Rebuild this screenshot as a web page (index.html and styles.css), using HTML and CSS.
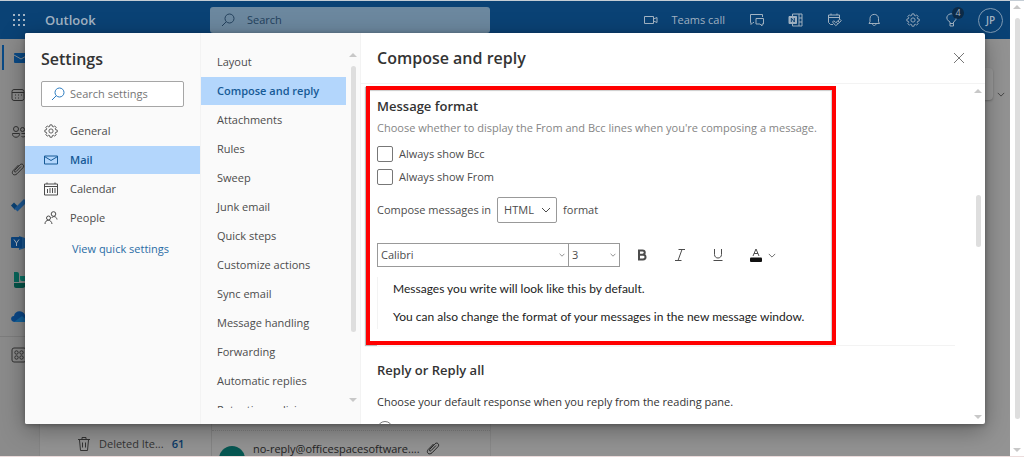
FILE: index.html
```html
<!DOCTYPE html>
<html lang="en">
<head>
  <meta charset="UTF-8" />
  <meta name="viewport" content="width=device-width, initial-scale=1" />
  <title>Outlook - Settings</title>
  <link rel="stylesheet" href="styles.css">
</head>
<body>

<!-- shared icons -->
<svg class="sprite" aria-hidden="true">
  <symbol id="i-search" viewBox="0 0 14 14"><circle cx="8.5" cy="5.5" r="4.500" /><path d="M5.3 8.7L1 13" /></symbol>
  <symbol id="i-chevron" viewBox="0 0 10 6"><path d="M1 1l4 4 4-4" /></symbol>
  <symbol id="i-clip" viewBox="0 0 14 14"><path d="M10 4.5L5 9.7c-1 1-2.300-.2-1.300-1.300L9 2.800c2-2 5 .6 3 2.900l-6 6.100c-3 2.800-6.300-.4-3.800-3.300L7.500 3" /></symbol>
  <symbol id="i-gear" viewBox="0 0 16 16"><path d="M6.800 1h2.400l.4 1.900 1 .4 1.600-1.100 1.700 1.700-1.100 1.600.4 1 1.900.4v2.300l-1.900.4-.4 1 1.100 1.600-1.700 1.700-1.600-1.100-1 .4-.4 1.900H6.800l-.4-1.900-1-.4-1.600 1.100-1.700-1.700 1.100-1.600-.4-1L1 9.200V6.900l1.800-.4.4-1-1.100-1.600 1.700-1.700 1.600 1.100 1-.4z" /><circle cx="8" cy="8" r="2.400" /></symbol>
</svg>

<div class="page">
  <div class="app">
    <header class="topbar">
      <button class="waffle" aria-label="App launcher">
        <svg width="14" height="14" viewBox="0 0 14 14">
          <path d="M1 1h2v2H1zM6 1h2v2H6zM11 1h2v2h-2zM1 6h2v2H1zM6 6h2v2H6zM11 6h2v2h-2zM1 11h2v2H1zM6 11h2v2H6zM11 11h2v2h-2z" />
        </svg>
      </button>
      <span class="brand">Outlook</span>
      <label class="top-search">
        <svg class="icon" width="14" height="14"><use href="#i-search" /></svg>
        <input type="text" placeholder="Search" aria-label="Search" />
      </label>
      <div class="top-actions">
        <button class="teams">
          <svg class="icon" width="16" height="12" viewBox="0 0 16 12"><path d="M1.500 2.500h9v7h-9zM10.500 5l3.500-1.500v5L10.500 7" /></svg>
          Teams call
        </button>
        <button aria-label="Chat">
          <svg class="icon" width="16" height="16" viewBox="0 0 16 16"><path d="M5 10.500H4l-2 2v-2H1.500v-8h12V5M7 6.500h7.500v5.500H13v2l-2-2H7z" /></svg>
        </button>
        <button aria-label="OneNote feed">
          <svg class="icon" width="16" height="16" viewBox="0 0 16 16"><path d="M4.500 4V2h9.500v12H4.500v-2M11 2v12M11 6h3M11 10h3" /><path class="solid" d="M1 4.500h7.500v7H1z" /><path class="cut" d="M3.300 10V6l3 4V6" /></svg>
        </button>
        <button aria-label="My day">
          <svg class="icon" width="16" height="16" viewBox="0 0 16 16"><path d="M6 12.500H3.500l-2-2V3h11v4M1.500 5.500h11M4 1.500V3M10 1.500V3M5.500 10l1.300-1.300 2 2 4-3.500 1.500 1.500-5.500 5z" /><path d="M9.500 10.500l1.300 1.300M11 9l1.500 1.300" /></svg>
        </button>
        <button aria-label="Notifications">
          <svg class="icon" width="16" height="16" viewBox="0 0 16 16"><path d="M3 11.500h10.500l-1-1.700V6.500c0-5.500-8.500-5.500-8.500 0v3.300zM6.500 12c.3 2 3.200 2 3.500 0" /></svg>
        </button>
        <button aria-label="Settings">
          <svg class="icon" width="14" height="14"><use href="#i-gear" /></svg>
        </button>
        <button class="tips" aria-label="Tips">
          <svg class="icon" width="16" height="16" viewBox="0 0 16 16"><path d="M6 11.500V10C.5 7 3 1.800 7.500 1.800S14.500 7 9.500 10v1.500zM6 11.500V14h3.500v-2.500" /></svg>
          <span class="badge">4</span>
        </button>
        <button class="avatar">JP</button>
      </div>
    </header>

    <div class="workspace">
      <nav class="rail">
        <a class="current" href="#" aria-label="Mail"><svg width="16" height="14" viewBox="0 0 16 14"><rect x="1" y="2" width="14" height="10" rx="1" fill="#0a4a86" /><path d="M1 4l7 4 7-4" fill="none" stroke="#8d9297" /></svg></a>
        <a href="#" aria-label="Calendar"><svg class="icon" width="14" height="14" viewBox="0 0 14 14"><rect x="1" y="1.500" width="12" height="11" rx="2" /><path d="M1 4.500h12M4 7h1M7 7h1M10 7h1M4 10h1M7 10h1" /></svg></a>
        <a href="#" aria-label="People"><svg class="icon" width="16" height="14" viewBox="0 0 16 14"><circle cx="5" cy="4" r="2.500" /><circle cx="11.500" cy="4.500" r="2" /><path d="M1.500 8.500h7c.5 5-7.500 5-7 0zM10.500 8.500H15c0 3-2 4-4.500 3" /></svg></a>
        <a href="#" aria-label="Files"><svg class="icon" width="14" height="14"><use href="#i-clip" /></svg></a>
        <a href="#" aria-label="To Do"><svg width="16" height="14" viewBox="0 0 16 14"><path d="M0 6.500l3-3 3.500 3.500L4 11z" fill="#0b4274" /><path d="M3.500 9.500L13 0l3 3-9.500 9.500z" fill="#1d5a96" /></svg></a>
        <a href="#" aria-label="Yammer"><svg width="16" height="16" viewBox="0 0 16 16"><path d="M8 1l6 2 2 5-2 5-6 2z" fill="#1c5a94" /><rect y="2" width="11" height="11" rx="1" fill="#0b4580" /><path d="M3 4.500l2.500 3.500L8 4.500M5.500 8v3" fill="none" stroke="#aab4bf" /></svg></a>
        <a href="#" aria-label="Bookings"><svg width="16" height="16" viewBox="0 0 16 16"><path d="M3 0h3a2 2 0 012 2v8H3z" fill="#08665b" /><path d="M9 4h5v5H11a2 2 0 01-2-2z" fill="#0a7467" /><path d="M3 11h12v1a4 4 0 01-4 4H5a2 2 0 01-2-2z" fill="#045449" /></svg></a>
        <a href="#" aria-label="OneDrive"><svg width="18" height="12" viewBox="0 0 18 12"><path d="M4 11C-1 11-1 5 3 5c1-6 9-6 11-1 4 0 5 7 1 7z" fill="#0a4787" /><path d="M3 11l8-6 6 5-2 1z" fill="#14639c" /></svg></a>
        <a class="more" href="#" aria-label="More apps"><svg class="icon" width="16" height="16" viewBox="0 0 16 16"><rect x="1" y="1" width="14" height="14" rx="2" /><circle cx="5.500" cy="5.500" r="1.700" /><circle cx="10.500" cy="5.500" r="1.700" /><circle cx="5.500" cy="10.500" r="1.700" /><circle cx="10.500" cy="10.500" r="1.700" /></svg></a>
      </nav>
      <div class="folders">
        <a class="folder" href="#">
          <svg class="icon" width="14" height="16" viewBox="0 0 14 16"><path d="M1 3.500h12M5 3V1.500h4V3M2.500 4l1 10.500h7l1-10.500M5.500 6.500v5M8.500 6.500v5" /></svg>
          <span>Deleted Ite...</span>
          <b>61</b>
        </a>
      </div>
      <div class="messages">
        <div class="message">
          <span class="face"></span>
          <span class="sender">no-reply@officespacesoftware....</span>
          <svg class="icon" width="14" height="14"><use href="#i-clip" /></svg>
        </div>
      </div>
      <div class="reading">
        <div class="ribbon"></div>
        <svg class="icon" width="8" height="5"><use href="#i-chevron" /></svg>
      </div>
    </div>

    <div class="overlay">
      <div class="dialog" role="dialog" aria-label="Settings">
        <div class="categories">
          <h2>Settings</h2>
          <label class="search-settings">
            <svg class="icon" width="14" height="14"><use href="#i-search" /></svg>
            <input type="text" placeholder="Search settings" aria-label="Search settings" />
          </label>
          <nav>
            <a href="#"><svg class="icon" width="14" height="14"><use href="#i-gear" /></svg>General</a>
            <a class="active" href="#"><svg class="icon" width="14" height="14" viewBox="0 0 14 14"><path d="M.5 3h13v8H.500zM.5 3.500L7 7.500l6.500-4" /></svg>Mail</a>
            <a href="#"><svg class="icon" width="14" height="14" viewBox="0 0 14 14"><path d="M.5 2h13v11H.500zM.5 4.500h13M3 .5V2M11 .5V2M3.500 7v4M6 6v5M8.500 6v5M11 6v5" /></svg>Calendar</a>
            <a href="#"><svg class="icon" width="14" height="14" viewBox="0 0 14 14"><circle cx="9.500" cy="3" r="2.300" /><circle cx="4.500" cy="7" r="2" /><path d="M1 13c0-5 6.500-5 7 0M7.500 7c2-2.500 5-1.500 5.500 1.500" /></svg>People</a>
          </nav>
          <a class="quick" href="#">View quick settings</a>
        </div>

        <div class="sections">
          <nav>
            <a href="#">Layout</a>
            <a class="active" href="#">Compose and reply</a>
            <a href="#">Attachments</a>
            <a href="#">Rules</a>
            <a href="#">Sweep</a>
            <a href="#">Junk email</a>
            <a href="#">Quick steps</a>
            <a href="#">Customize actions</a>
            <a href="#">Sync email</a>
            <a href="#">Message handling</a>
            <a href="#">Forwarding</a>
            <a href="#">Automatic replies</a>
            <a href="#">Retention policies</a>
          </nav>
          <div class="scrollbar"><i class="up"></i><span class="thumb"></span><i class="down"></i></div>
        </div>

        <main class="detail">
          <div class="detail-head">
            <h2>Compose and reply</h2>
            <button class="close" aria-label="Close">
              <svg class="icon" width="12" height="12" viewBox="0 0 12 12"><path d="M1 1l10 10M11 1L1 11" /></svg>
            </button>
          </div>
          <div class="detail-body">
            <div class="content">
              <section class="format">
                <h3>Message format</h3>
                <p class="hint">Choose whether to display the From and Bcc lines when you're composing a message.</p>
                <label class="check"><input type="checkbox" />Always show Bcc</label>
                <label class="check"><input type="checkbox" />Always show From</label>
                <div class="compose">
                  <label for="mode">Compose messages in</label>
                  <span class="select mode">
                    <select id="mode"><option>HTML</option></select>
                    <svg class="icon" width="10" height="6"><use href="#i-chevron" /></svg>
                  </span>
                  <span>format</span>
                </div>
                <div class="tools">
                  <span class="select font">
                    <select aria-label="Font"><option>Calibri</option></select>
                    <svg class="icon" width="6" height="4"><use href="#i-chevron" /></svg>
                  </span>
                  <span class="select size">
                    <select aria-label="Font size"><option>3</option></select>
                    <svg class="icon" width="6" height="4"><use href="#i-chevron" /></svg>
                  </span>
                  <button aria-label="Bold"><svg class="icon bold" width="12" height="14" viewBox="0 0 12 14"><path d="M3 2.500h3.500c3 0 3 4.200 0 4.200H3zM3 6.700h4c3.400 0 3.400 4.800 0 4.800H3z" /></svg></button>
                  <button aria-label="Italic"><svg class="icon" width="12" height="14" viewBox="0 0 12 14"><path d="M4.500 1.500H11M1 12.500h6.500M8 1.500l-4 11" /></svg></button>
                  <button aria-label="Underline"><svg class="icon" width="12" height="14" viewBox="0 0 12 14"><path d="M2.500 1v5.500c0 4.700 7 4.700 7 0V1M1.500 12.500h9" /></svg></button>
                  <button class="color" aria-label="Font color">
                    <svg class="icon" width="12" height="14" viewBox="0 0 12 14"><path d="M3 8l3-7 3 7M4 5.500h4" /><rect x="0" y="9.500" width="12" height="4.500" rx="1" /></svg>
                    <svg class="icon" width="8" height="5"><use href="#i-chevron" /></svg>
                  </button>
                </div>
                <div class="preview">
                  <p>Messages you write will look like this by default.</p>
                  <p>You can also change the format of your messages in the new message window.</p>
                </div>
              </section>
              <section class="reply">
                <h3>Reply or Reply all</h3>
                <p>Choose your default response when you reply from the reading pane.</p>
                <input type="radio" name="reply" aria-label="Reply" />
              </section>
            </div>
            <div class="scrollbar"><i class="up"></i><span class="thumb"></span><i class="down"></i></div>
          </div>
        </main>
      </div>
    </div>
  </div>
  <div class="scrollbar outer"><i class="up"></i><span class="thumb"></span><i class="down"></i></div>
</div>

</body>
</html>
```

FILE: styles.css
```css
* {
  margin: 0;
  padding: 0;
  box-sizing: border-box;
}

body {
  font-family: "Open Sans", "Noto Sans", sans-serif;
  font-size: 11px;
  line-height: 16px;
  color: #4c4c4c;
  background: #fff;
}

button,
input,
select {
  font: inherit;
  color: inherit;
  border: none;
  background: none;
}

a {
  color: inherit;
  text-decoration: none;
}

svg {
  flex: none;
}

.sprite {
  display: none;
}

.icon {
  fill: none;
  stroke: currentColor;
  stroke-width: 1;
}

.page {
  display: flex;
  height: 100vh;
  border-top: 1px solid #c4cdd5;
  border-bottom: 1px solid #ecdcdc;
  overflow: hidden;
}

.app {
  position: relative;
  flex: 1;
  display: flex;
  flex-direction: column;
  min-width: 0;
  overflow: hidden;
}

/* top bar */
.topbar {
  display: flex;
  align-items: center;
  flex: none;
  height: 38px;
  padding: 0 7px 0 12px;
  background: #0a4275;
  color: #a3b4c4;
}

.waffle,
.top-actions button {
  display: flex;
  align-items: center;
  justify-content: center;
}

.waffle svg {
  fill: currentColor;
}

.brand {
  width: 165px;
  margin-left: 19px;
  font-size: 13px;
  font-weight: 600;
}

.top-search {
  display: flex;
  align-items: center;
  gap: 12px;
  width: 280px;
  height: 26px;
  padding: 0 11px;
  border-radius: 3px;
  background: #6c889f;
  color: #23415d;
}

.top-search input {
  flex: 1;
  min-width: 0;
}

::placeholder {
  color: inherit;
  opacity: 1;
}

.top-actions {
  display: flex;
  align-items: center;
  gap: 14px;
  margin-left: auto;
}

.top-actions button {
  width: 25px;
  height: 26px;
}

.top-actions .teams {
  width: auto;
  gap: 12px;
  padding-right: 5px;
}

.solid {
  fill: currentColor;
}

.cut {
  stroke: #0a4275;
}

.tips {
  position: relative;
}

.badge {
  position: absolute;
  top: 0;
  right: 0;
  width: 12px;
  height: 12px;
  border-radius: 6px;
  background: #0d2b48;
  font-size: 9px;
  line-height: 12px;
}

.top-actions .avatar {
  border: 1px solid #7f9ab3;
  border-radius: 50%;
  height: 25px;
  font-size: 10px;
  font-weight: 600;
}

/* mailbox behind the dialog */
.workspace {
  flex: 1;
  display: flex;
  min-height: 0;
  background: #939393;
  color: #333;
}

.rail {
  width: 39px;
  background: #8b8b8b;
  overflow: hidden;
}

.rail a {
  display: flex;
  align-items: center;
  height: 37px;
  padding-left: 11px;
}

.rail .current {
  padding-left: 9px;
  border-left: 2px solid #0a4a86;
  margin: 6px 0 0 2px;
  height: 25px;
}

.rail .current + a {
  margin-top: 6px;
}

.rail .more {
  margin-top: 1px;
  border-top: 1px solid #7d7d7d;
}

.folders,
.messages {
  display: flex;
  flex-direction: column;
  justify-content: flex-end;
  overflow: hidden;
  border-left: 1px solid #858585;
}

.folders {
  width: 172px;
}

.folder {
  display: flex;
  align-items: center;
  gap: 8px;
  height: 24px;
  padding-left: 37px;
}

.folder b {
  font-weight: 600;
  color: #0a3a68;
}

.messages {
  width: 280px;
  border-right: 1px solid #898989;
}

.message {
  display: flex;
  gap: 8px;
  height: 44px;
  margin-bottom: -18px;
  padding: 10px 0 0 7px;
  border-top: 1px dotted #808080;
  color: #222;
  white-space: nowrap;
}

.face {
  width: 26px;
  height: 26px;
  margin-top: 5px;
  border-radius: 50%;
  background: #075752;
}

.sender {
  width: 165px;
}

.reading {
  flex: 1;
  display: flex;
  align-items: flex-start;
  justify-content: flex-end;
  gap: 4px;
  padding: 29px 5px 0 0;
}

.ribbon {
  flex: 1;
  height: 32px;
  border-radius: 4px;
  background: #999;
  box-shadow: 0 1px 2px rgba(0, 0, 0, 0.25);
}

.reading .icon {
  margin-top: 24px;
}

/* settings dialog */
.overlay {
  position: absolute;
  inset: 0;
  padding: 32px 25px;
}

.dialog {
  display: flex;
  height: 100%;
  border-radius: 2px;
  background: #fff;
  box-shadow: 0 6px 25px rgba(0, 0, 0, 0.35), 0 1px 5px rgba(0, 0, 0, 0.3);
  overflow: hidden;
}

.categories {
  width: 176px;
  padding-top: 14px;
  background: #fafafa;
  border-right: 1px solid #f3f3f3;
}

h2 {
  font-size: 16px;
  line-height: 24px;
  font-weight: 600;
  color: #333;
}

.categories h2 {
  padding-left: 16px;
}

.search-settings {
  display: flex;
  align-items: center;
  gap: 5px;
  height: 26px;
  margin: 10px 16px;
  padding: 0 9px;
  border: 1px solid #a6a6a6;
  border-radius: 2px;
  background: #fff;
  color: #767676;
}

.search-settings .icon {
  color: #2b7bc0;
}

.search-settings input {
  flex: 1;
  min-width: 0;
}

.dialog nav {
  display: flex;
  flex-direction: column;
  gap: 1px;
}

.dialog nav a {
  display: flex;
  align-items: center;
  flex: none;
  height: 28px;
}

.categories nav a {
  gap: 12px;
  padding-left: 19px;
}

.dialog nav .active {
  background: #b3d6fc;
  color: #165a96;
  font-weight: 600;
}

.quick {
  display: block;
  margin: 9px 0 0 47px;
  color: #2a6ca5;
}

.sections {
  display: flex;
  width: 160px;
  padding: 15px 0 16px;
  background: #fafafa;
  border-right: 1px solid #f3f3f3;
}

.sections nav {
  flex: 1;
  overflow: hidden;
}

.sections nav a {
  padding-left: 16px;
}

.scrollbar {
  display: flex;
  flex-direction: column;
  align-items: center;
  width: 14px;
}

.up,
.down {
  border: 4px solid transparent;
}

.up {
  border-top: none;
  border-bottom-color: #c8c8c8;
}

.down {
  border-bottom: none;
  border-top-color: #c8c8c8;
}

.thumb {
  width: 5px;
  border-radius: 3px;
  background: #dedede;
}

.sections .scrollbar {
  padding: 5px 0 6px;
}

.sections .thumb {
  flex: 4;
  margin-top: 9px;
}

.sections .scrollbar::after,
.detail .scrollbar::before,
.detail .scrollbar::after,
.outer::after {
  content: "";
  flex: 1;
}

.sections .down,
.detail .down,
.outer .down {
  order: 1;
}

.detail {
  flex: 1;
  display: flex;
  flex-direction: column;
  min-width: 0;
}

.detail-head {
  display: flex;
  align-items: center;
  justify-content: space-between;
  flex: none;
  height: 51px;
  padding: 0 20px 0 16px;
  border-bottom: 1px solid #f3f3f3;
}

.close {
  display: flex;
  color: #777;
}

.detail-body {
  flex: 1;
  display: flex;
  min-height: 0;
}

.content {
  flex: 1;
  min-width: 0;
  overflow: hidden;
}

.detail .scrollbar {
  padding: 5px 0;
}

.detail .up {
  order: -1;
}

.detail .scrollbar::before {
  flex: 14;
}

.detail .thumb {
  flex: 7;
}

.detail .scrollbar::after {
  flex: 23;
}

h3 {
  font-size: 13px;
  line-height: 20px;
  font-weight: 600;
  color: #333;
}

.format {
  width: 77%;
  margin: 2px 0 0 5px;
  padding: 6px 7px 8px;
  border: 4px solid #f00;
  box-shadow: -1px 1px 1px #bbb, inset -1px 1px 1px #ccc;
}

.hint {
  margin: 4px 0 10px;
  color: #858585;
  white-space: nowrap;
}

.check {
  display: flex;
  align-items: center;
  gap: 6px;
  width: max-content;
  margin-bottom: 7px;
}

.check input,
.reply input {
  appearance: none;
  width: 16px;
  height: 16px;
  border: 1px solid #777;
  border-radius: 2px;
}

.compose {
  display: flex;
  align-items: center;
  gap: 6px;
  margin-top: 12px;
}

.select {
  position: relative;
  display: flex;
  border: 1px solid #999;
}

.select select {
  appearance: none;
  width: 100%;
  padding-left: 3px;
}

.select .icon {
  position: absolute;
  top: 50%;
  right: 3px;
  margin-top: -2px;
  pointer-events: none;
}

.mode {
  width: 60px;
  height: 26px;
  border-radius: 2px;
}

.mode select {
  padding-left: 6px;
}

.mode .icon {
  right: 5px;
  margin-top: -3px;
}

.tools {
  display: flex;
  align-items: center;
  margin-top: 20px;
}

.font,
.size {
  height: 24px;
}

.font {
  width: 192px;
}

.size {
  width: 52px;
  margin: 0 16px 0 -1px;
}

.tools button {
  display: flex;
  align-items: center;
  margin-right: 26px;
}

.bold {
  stroke-width: 2;
}

.tools .color {
  gap: 6px;
  margin-right: 0;
}

.color rect {
  fill: #111;
  stroke: none;
}

.preview {
  margin-top: 10px;
  padding-left: 15px;
  border-left: 1px solid #f3f3f3;
  font-family: Lato, sans-serif;
  font-size: 12px;
  color: #222;
  white-space: nowrap;
}

.preview p {
  padding: 4px 0;
  margin-bottom: 4px;
}

.reply {
  margin: 0 16px;
  padding-top: 14px;
  border-top: 1px solid #f3f3f3;
}

.reply p {
  margin: 14px 0 11px;
  color: #333;
  font-weight: 500;
}

.reply input {
  display: block;
  border-radius: 50%;
}

/* window scrollbar */
.outer {
  padding: 4px 0;
}

.outer .thumb {
  flex: 14;
  margin-top: 9px;
}
```
